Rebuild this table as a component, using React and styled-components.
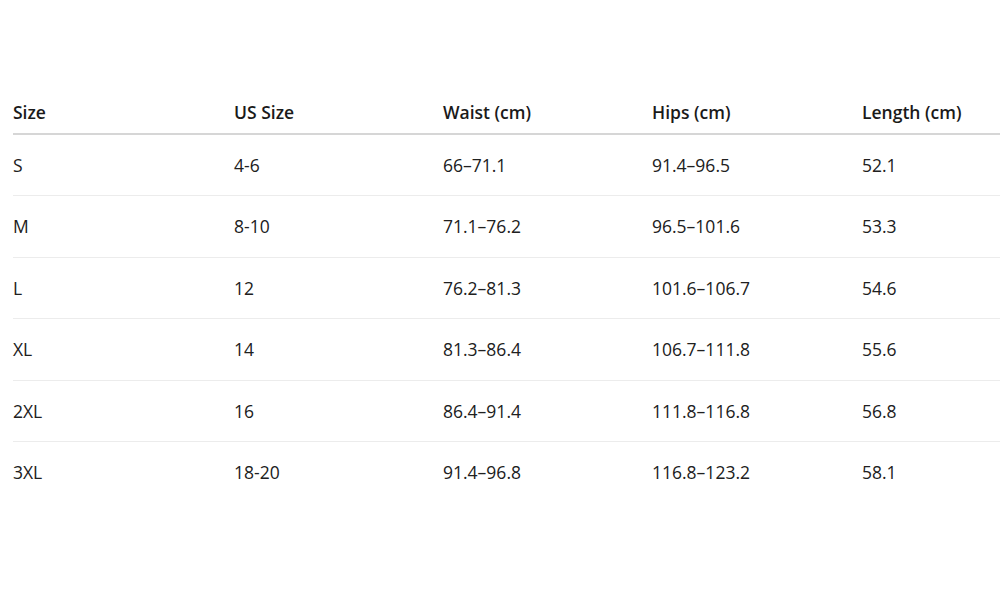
import styled, { createGlobalStyle } from 'styled-components';

const GlobalStyle = createGlobalStyle`
    html, body {
        margin: 0;
        padding: 0;
        background: #ffffff;
    }
    body {
        font-family: "Open Sans", "Noto Sans", sans-serif;
        color: #1b1b1b;
    }
`;

const columns = [
    { label: 'Size', width: 221 },
    { label: 'US Size', width: 209 },
    { label: 'Waist (cm)', width: 209 },
    { label: 'Hips (cm)', width: 210 },
    { label: 'Length (cm)', width: 'auto' },
];

const rows = [
    ['S', '4-6', '66–71.1', '91.4–96.5', '52.1'],
    ['M', '8-10', '71.1–76.2', '96.5–101.6', '53.3'],
    ['L', '12', '76.2–81.3', '101.6–106.7', '54.6'],
    ['XL', '14', '81.3–86.4', '106.7–111.8', '55.6'],
    ['2XL', '16', '86.4–91.4', '111.8–116.8', '56.8'],
    ['3XL', '18-20', '91.4–96.8', '116.8–123.2', '58.1'],
];

export default function App() {
    return (
        <>
            <GlobalStyle />
            <Page>
                <SizeTable>
                    <colgroup>
                        {columns.map((col, key) => (
                            <Col key={key} $width={col.width} />
                        ))}
                    </colgroup>
                    <thead>
                        <tr>
                            {columns.map((col, key) => (
                                <HeadCell key={key}>{col.label}</HeadCell>
                            ))}
                        </tr>
                    </thead>
                    <tbody>
                        {rows.map((row, i) => (
                            <Row key={i} $last={i === rows.length - 1}>
                                {row.map((value, j) => (
                                    <Cell key={j}>{value}</Cell>
                                ))}
                            </Row>
                        ))}
                    </tbody>
                </SizeTable>
            </Page>
        </>
    );
}

const Page = styled.div`
    width: 1000px;
    height: 594px;
    overflow: hidden;
    padding: 90px 0 0 13px;
    box-sizing: border-box;
`;

const SizeTable = styled.table`
    width: 987px;
    border-collapse: collapse;
    table-layout: fixed;
    font-size: 17.5px;
`;

const Col = styled.col`
    width: ${props => (props.$width === 'auto' ? 'auto' : `${props.$width}px`)};
`;

const HeadCell = styled.th`
    text-align: left;
    font-weight: 600;
    padding: 12px 0 11px 0;
    line-height: 20px;
    border-bottom: 2px solid #d6d6d6;
    color: #1a1a1a;
`;

const Row = styled.tr`
    border-bottom: ${props => (props.$last ? 'none' : '1px solid #ececec')};
`;

const Cell = styled.td`
    padding: 20px 0;
    line-height: 20.4px;
    color: #202020;
`;
